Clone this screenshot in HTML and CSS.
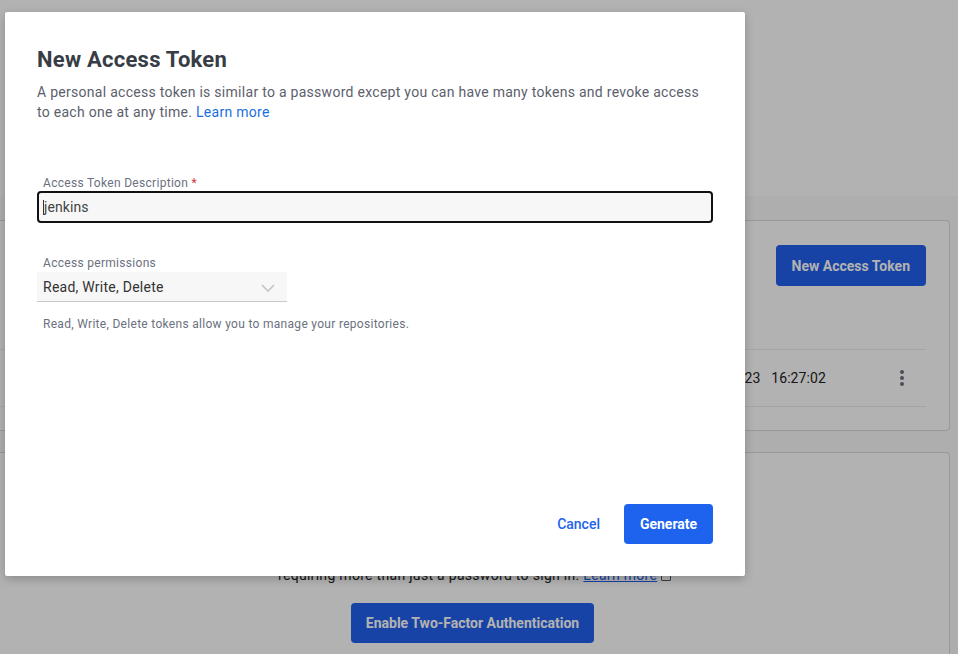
FILE: index.html
```html
<!DOCTYPE html>
<html lang="en">
<head>
<meta charset="utf-8">
<title>New Access Token</title>
<link rel="stylesheet" href="styles.css">
</head>
<body>
<div class="page">
  <header class="page-head"></header>
  <main class="content">
    <section class="card tokens">
      <div class="tokens-top">
        <button class="btn-primary">New Access Token</button>
      </div>
      <div class="token-row">
        <span class="token-date">Jan 12, 2023&nbsp;&nbsp;&nbsp;16:27:02</span>
        <span class="kebab"><i></i><i></i><i></i></span>
      </div>
    </section>
    <section class="card twofa">
      <p class="twofa-text">Two-factor authentication adds an extra layer of security to your account by<br>requiring more than just a password to sign in. <a href="#">Learn more</a> <span class="ext"></span></p>
      <button class="btn-primary btn-2fa">Enable Two-Factor Authentication</button>
    </section>
  </main>
</div>
<div class="overlay"></div>
<div class="modal" role="dialog">
  <h1 class="modal-title">New Access Token</h1>
  <p class="modal-desc">A personal access token is similar to a password except you can have many tokens and revoke access to each one at any time. <a href="#">Learn more</a></p>
  <div class="field field-desc">
    <label class="field-label">Access Token Description <span class="req">*</span></label>
    <div class="text-input"><span class="caret"></span>jenkins</div>
  </div>
  <div class="field field-perm">
    <label class="field-label">Access permissions</label>
    <div class="select">
      <span>Read, Write, Delete</span>
      <svg class="chev" width="14" height="8" viewBox="0 0 14 8"><path d="M1 1l6 6 6-6" fill="none" stroke="#c4c4c4" stroke-width="1.6"/></svg>
    </div>
    <p class="helper">Read, Write, Delete tokens allow you to manage your repositories.</p>
  </div>
  <div class="modal-actions">
    <button class="btn-text">Cancel</button>
    <button class="btn-generate">Generate</button>
  </div>
</div>
</body>
</html>
```

FILE: styles.css
```css
* { box-sizing: border-box; }
html, body { margin: 0; padding: 0; }
body {
  width: 958px;
  height: 654px;
  overflow: hidden;
  font-family: Roboto, "Liberation Sans", sans-serif;
  background: #fafafa;
  position: relative;
}
.page { width: 958px; }
.page-head {
  height: 196px;
  background: #ffffff;
}
.content {
  padding: 24px 8px 0 0;
  display: flex;
  flex-direction: column;
  gap: 21px;
}
.card {
  background: #fff;
  border: 1px solid #dcdcdc;
  border-left: none;
  border-radius: 0 4px 4px 0;
}
.tokens { height: 211px; padding: 24px 23px 0 0; }
.tokens-top { display: flex; justify-content: flex-end; height: 104px; }
.btn-primary {
  font-family: Roboto, "Liberation Sans", sans-serif;
  background: #2060ed;
  color: #fff;
  border: none;
  border-radius: 4px;
  font-size: 14px;
  font-weight: 700;
  height: 41px;
  padding: 0 16px;
  white-space: nowrap;
}
.token-row {
  border-top: 1px solid #ececec;
  border-bottom: 1px solid #ececec;
  height: 58px;
  display: flex;
  align-items: center;
  justify-content: flex-end;
  padding-right: 22px;
}
.token-date { font-size: 14px; color: #222; margin-right: 74px; letter-spacing: 0.1px; }
.kebab { display: flex; flex-direction: column; gap: 2px; }
.kebab i { width: 4px; height: 4px; border-radius: 50%; background: #6b7280; display: block; }
.twofa {
  height: 230px;
  display: flex;
  flex-direction: column;
  align-items: center;
  padding-top: 92px;
}
.twofa-text {
  margin: 0 0 18px;
  font-size: 14px;
  line-height: 20px;
  color: #222;
  text-align: center;
  letter-spacing: 0.3px;
}
.twofa-text a { color: #2060ed; }
.ext { display: inline-block; width: 10px; height: 10px; border: 1.5px solid #555; border-radius: 1px; vertical-align: -1px; }
.btn-2fa { height: 40px; padding: 0 15px; margin-right: 4px; }

.overlay {
  position: absolute;
  inset: 0;
  background: rgba(0, 0, 0, 0.3);
}
.modal {
  position: absolute;
  left: 5px;
  top: 12px;
  width: 740px;
  height: 564px;
  background: #fff;
  border-radius: 2px;
  box-shadow: 0 3px 10px rgba(0, 0, 0, 0.22);
  padding: 34px 32px 32px;
  display: flex;
  flex-direction: column;
}
.modal-title {
  margin: 0;
  font-size: 22px;
  line-height: 28px;
  font-weight: 700;
  color: #383d45;
  letter-spacing: 0.25px;
}
.modal-desc {
  margin: 8px 0 0;
  font-size: 14px;
  line-height: 20px;
  color: #5b606c;
  letter-spacing: 0.28px;
}
.modal-desc a { color: #1a6fe0; text-decoration: none; }
.field-desc { margin-top: 54px; }
.field-label {
  display: block;
  font-size: 12px;
  line-height: 14px;
  color: #6b7180;
  padding-left: 6px;
  letter-spacing: 0.3px;
}
.req { color: #d4353d; }
.text-input {
  margin-top: 1px;
  height: 32px;
  border: 2px solid #111;
  border-radius: 4px;
  background: #f7f7f7;
  font-size: 14px;
  color: #444;
  display: flex;
  align-items: center;
  padding-left: 4px;
  letter-spacing: 0.1px;
}
.caret { width: 1px; height: 15px; background: #333; margin-right: 0; }
.field-perm { margin-top: 33px; }
.select {
  margin-top: 2px;
  width: 250px;
  height: 30px;
  background: #f7f7f7;
  border-bottom: 1px solid #c8c8c8;
  display: flex;
  align-items: center;
  justify-content: space-between;
  padding: 0 12px 0 6px;
  font-size: 14px;
  color: #333;
  letter-spacing: 0.25px;
}
.chev { margin-top: 2px; }
.helper {
  margin: 14px 0 0;
  font-size: 12px;
  line-height: 16px;
  color: #6b7180;
  padding-left: 6px;
  letter-spacing: 0.3px;
}
.modal-actions {
  margin-top: auto;
  display: flex;
  justify-content: flex-end;
  gap: 8px;
}
.btn-text {
  font-family: Roboto, "Liberation Sans", sans-serif;
  background: none;
  border: none;
  color: #1d63ed;
  font-size: 14px;
  font-weight: 500;
  height: 40px;
  padding: 0 16px;
}
.btn-generate {
  font-family: Roboto, "Liberation Sans", sans-serif;
  background: #1d63ed;
  border: none;
  border-radius: 4px;
  color: #fff;
  font-size: 14px;
  font-weight: 700;
  height: 40px;
  width: 89px;
}
```
